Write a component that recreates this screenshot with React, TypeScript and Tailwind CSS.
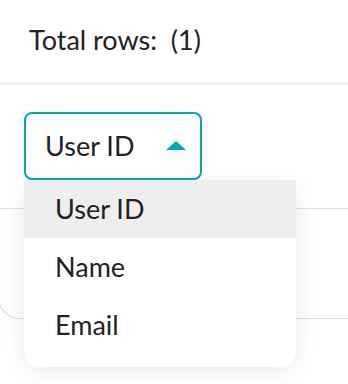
import { useState } from "react";

const options = ["User ID", "Name", "Email"];

export default function App() {
  const [selected] = useState("User ID");

  return (
    <div className="h-[384px] w-[348px] overflow-hidden bg-white font-['Lato',sans-serif] text-[#222]">
      <div className="flex h-[84px] items-center border-b border-[#e3e5ef] pl-[29px] pb-[3px]">
        <span className="text-[27px] whitespace-pre">Total rows:  (1)</span>
      </div>

      <div className="px-6 pt-[28px]">
        <div className="relative w-[178px]">
          <button className="flex h-[68px] w-[178px] items-center justify-between rounded-lg border-2 border-[#0aa5b4] bg-white pl-[19px] pr-[14px] text-[27px] shadow-[0_0_18px_rgba(0,0,0,0.04)]">
            <span>{selected}</span>
            <svg width="20" height="9" viewBox="0 0 20 9" className="mb-[1px]">
              <polygon points="10,0 20,9 0,9" fill="#0aa5b4" />
            </svg>
          </button>

          <ul className="absolute left-0 top-full z-10 w-[272px] rounded-b-2xl bg-white pb-[13px] shadow-[0_6px_28px_rgba(0,0,0,0.08)]">
            {options.map((opt) => (
              <li
                key={opt}
                className={`flex h-[58px] items-center pl-[31px] text-[27px] ${
                  opt === selected ? "bg-[#eeeeee]" : ""
                }`}
              >
                {opt}
              </li>
            ))}
          </ul>
        </div>
      </div>

      <div className="mt-[28px] ml-[-2px] h-[111px] rounded-bl-[22px] border-y border-l border-[#d9dcee]" />
    </div>
  );
}
